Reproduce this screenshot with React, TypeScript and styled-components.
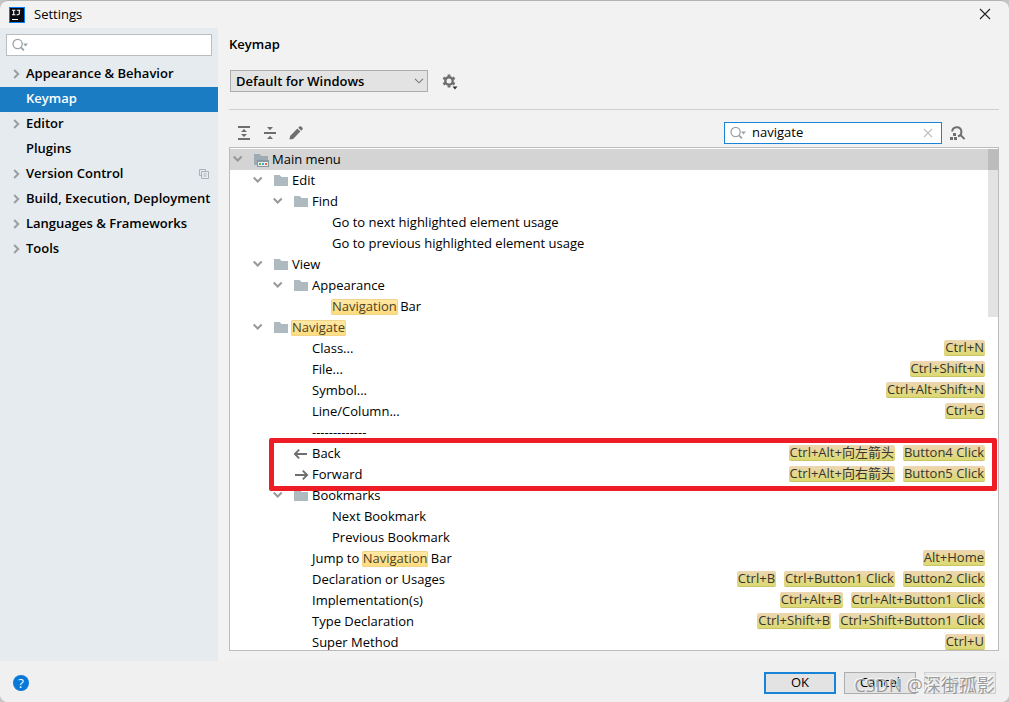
import React from "react";
import styled, { createGlobalStyle, css } from "styled-components";

const GlobalStyle = createGlobalStyle`
  *, *::before, *::after { box-sizing: border-box; }
  html, body { margin: 0; background: #c6c6c6; }
  body, button, input, select {
    font-family: "Open Sans", "Noto Sans CJK SC", sans-serif;
    font-size: 13px;
    line-height: 20px;
    color: #000;
  }
`;

const Window = styled.div`
  position: relative;
  display: flex;
  flex-direction: column;
  height: 100vh;
  overflow: hidden;
  background: #f2f2f2;
  border-top: 1px solid #b4b4b4;
  border-radius: 8px;
`;

const TitleBar = styled.header`
  display: flex;
  align-items: center;
  flex: none;
  height: 27px;
  padding: 0 18px 0 9px;
`;

const WindowTitle = styled.span`
  flex: 1;
  margin-left: 9px;
  padding-bottom: 2px;
`;

const IconButton = styled.button`
  display: flex;
  align-items: center;
  justify-content: center;
  flex: none;
  padding: 0;
  border: 0;
  background: none;
`;

const Body = styled.div`
  display: flex;
  flex: 1;
  min-height: 0;
`;

const Sidebar = styled.aside`
  flex: none;
  width: 218px;
  padding-top: 6px;
  background: #e6ebef;
`;

const SearchBox = styled.label<{ $active?: boolean }>`
  display: flex;
  align-items: center;
  height: 22px;
  padding: 0 8px 0 5px;
  background: #fff;
  border: 1px solid ${(p) => (p.$active ? "#1883d7" : "#b9bdc0")};
  svg { flex: none; }
`;

const SearchInput = styled.input`
  flex: 1;
  min-width: 0;
  height: 18px;
  padding: 0 0 2px;
  margin-left: 4px;
  border: 0;
  outline: 0;
  background: none;
`;

const SidebarSearch = styled.div`
  padding: 0 6px 6px;
`;

const CategoryList = styled.ul`
  margin: 0;
  padding: 0;
  list-style: none;
`;

const CategoryButton = styled.button<{ $selected?: boolean }>`
  display: flex;
  align-items: center;
  width: 100%;
  height: 25px;
  padding: 0 9px 2px 12px;
  border: 0;
  background: ${(p) => (p.$selected ? "#1a7dc4" : "transparent")};
  color: ${(p) => (p.$selected ? "#fff" : "#000")};
  font-weight: 600;
  text-align: left;
  white-space: nowrap;
`;

const CategoryChevron = styled.span`
  display: flex;
  flex: none;
  width: 14px;
`;

const CategoryLabel = styled.span`
  flex: 1;
  padding-bottom: 2px;
`;

const Main = styled.main`
  display: flex;
  flex-direction: column;
  flex: 1;
  min-width: 0;
  padding: 6px 10px 10px 11px;
`;

const PageTitle = styled.h1`
  margin: 0;
  font-size: 13px;
  line-height: 20px;
  font-weight: 600;
`;

const SchemeRow = styled.div`
  display: flex;
  align-items: center;
  gap: 14px;
  padding: 16px 0 17px 1px;
  border-bottom: 1px solid #cfcfcf;
`;

const SelectWrap = styled.div`
  display: grid;
  align-items: center;
  width: 198px;
  > * { grid-area: 1 / 1; }
  > svg { justify-self: end; margin-right: 4px; pointer-events: none; }
`;

const SchemeSelect = styled.select`
  appearance: none;
  width: 100%;
  height: 22px;
  padding: 0 5px;
  border: 1px solid #adadad;
  border-radius: 0;
  background: #e3e3e3;
  font-weight: 600;
`;

const Toolbar = styled.div`
  display: flex;
  align-items: center;
  gap: 10px;
  padding: 12px 33px 3px 7px;
`;

const ToolbarSpacer = styled.div`
  flex: 1;
`;

const FilterGroup = styled.div`
  display: flex;
  align-items: center;
  gap: 8px;
`;

const FilterBox = styled(SearchBox)`
  width: 218px;
`;

const Tree = styled.div`
  position: relative;
  flex: 1;
  min-height: 0;
  overflow: hidden;
  padding-top: 1px;
  background: #fff;
  border: 1px solid #bcbcbc;
`;

const TreeRow = styled.div<{ $level: number; $selected?: boolean }>`
  display: flex;
  align-items: center;
  height: 21px;
  padding: 0 13px 0 ${(p) => 2 + p.$level * 20}px;
  white-space: nowrap;
  ${(p) => p.$selected && css`background: #d4d4d4;`}
`;

const TwistySlot = styled.span`
  display: flex;
  flex: none;
  width: 22px;
  padding-bottom: 1px;
`;

const IconSlot = styled.span`
  display: flex;
  flex: none;
  width: 18px;
  padding-bottom: 1px;
`;

const RowLabel = styled.span`
  flex: 1;
  padding-bottom: 2px;
`;

const Mark = styled.mark`
  display: inline-block;
  height: 16px;
  margin: 0 -1px;
  padding: 0 1px;
  line-height: 14px;
  color: #4a4228;
  background: linear-gradient(#ffe9a8, #ffdc7c);
  border-radius: 2px;
  box-shadow: inset 0 0 0 1px #efd48a;
`;

const Shortcuts = styled.span`
  display: flex;
  gap: 8px;
  padding-bottom: 1px;
`;

const Chip = styled.kbd`
  height: 16px;
  padding: 0 1px;
  font-family: inherit;
  font-size: 13px;
  line-height: 15px;
  color: #35352c;
  background: linear-gradient(#eed6b2, #dcd972);
  border-bottom: 1px solid #c9c566;
  border-radius: 2px;
`;

const Annotated = styled.div`
  position: relative;
`;

const AnnotationFrame = styled.div`
  position: absolute;
  z-index: 2;
  inset: -5px 1px -6px 39px;
  border: 5px solid #ee1c25;
  border-radius: 2px;
  pointer-events: none;
`;

const ScrollTrack = styled.div`
  position: absolute;
  z-index: 1;
  top: 1px;
  right: 0;
  bottom: 0;
  width: 10px;
`;

const ScrollThumb = styled.div`
  height: 168px;
  background: rgba(0, 0, 0, 0.11);
`;

const Footer = styled.footer`
  display: flex;
  align-items: center;
  flex: none;
  gap: 8px;
  height: 41px;
  padding: 2px 13px 0;
  background: #f0f0f0;
`;

const HelpButton = styled.button`
  width: 16px;
  height: 16px;
  margin-right: auto;
  padding: 0;
  border: 0;
  border-radius: 50%;
  background: #0a78d8;
  color: #fff;
  line-height: 16px;
  text-align: center;
`;

const DialogButton = styled.button<{ $primary?: boolean }>`
  width: 72px;
  height: 22px;
  padding: 0 0 2px;
  line-height: 16px;
  background: #e3e3e3;
  border: ${(p) => (p.$primary ? "2px solid #1883d7" : "1px solid #adadad")};
  &:disabled { color: #b4b4b4; background: #eaeaea; border-color: #cfcfcf; }
`;

const Watermark = styled.div`
  position: absolute;
  right: 14px;
  bottom: 5px;
  font-size: 18px;
  line-height: 24px;
  color: rgba(140, 140, 140, 0.85);
  text-shadow: -1px -1px 0 rgba(255, 255, 255, 0.8);
  pointer-events: none;
`;

const SearchIcon = () => (
  <svg width="18" height="16" viewBox="0 0 18 16" fill="none">
    <circle cx="5.6" cy="7" r="4.6" stroke="#9aa3aa" strokeWidth="1.3" />
    <path d="M8.9 10.3 12 13.4" stroke="#9aa3aa" strokeWidth="1.8" />
    <path d="M11 6.5h5l-2.5 3z" fill="#9aa3aa" />
  </svg>
);

const ChevronRight = () => (
  <svg width="10" height="12" viewBox="0 0 10 12" fill="none" stroke="#9a9ea1" strokeWidth="2">
    <path d="m2.2 2 4 4-4 4" />
  </svg>
);

const ChevronDown = () => (
  <svg width="12" height="12" viewBox="0 0 12 12" fill="none" stroke="#999" strokeWidth="2">
    <path d="m1.7 3.5 4 4 4-4" />
  </svg>
);

const Folder = () => (
  <svg width="16" height="16" viewBox="0 0 16 16">
    <path d="M0 3h5.6l2 2H14v9H0z" fill="#aeb9c0" />
  </svg>
);

const MenuFolder = () => (
  <svg width="16" height="16" viewBox="0 0 16 16">
    <path d="M0 3h5.6l2 2H14v3H2v6H0z" fill="#9fabb3" />
    <path d="M2 8h12v1H3v5H2z" fill="#9fabb3" />
    <path d="M3 9h12v7H3z" fill="#8797a3" />
    <path d="M4 11h10v4H4z" fill="#e8edf0" />
    <path d="M5 12h2v2H5z" fill="#62b543" />
    <path d="M8 12h2v2H8z" fill="#40a6dd" />
    <path d="M11 12h2v2h-2z" fill="#f26522" />
  </svg>
);

const Arrow = ({ forward }: { forward?: boolean }) => (
  <svg width="16" height="16" viewBox="0 0 16 16" fill="none" stroke="#6e6e6e" strokeWidth="1.8">
    {forward ? <path d="M1 9h12M8.8 4.6 13.2 9l-4.4 4.4" /> : <path d="M13 9H1M5.2 4.6.8 9l4.4 4.4" />}
  </svg>
);

const AppLogo = () => (
  <svg width="16" height="16" viewBox="0 0 16 16">
    <path d="M0 0h16v16H0z" fill="#087cfa" />
    <path d="M1 1h14v14H1z" fill="#0c0c10" />
    <path d="M3 3.2h3.4M4.7 3v5M3 7.8h3.4M7.8 3.2h3.4M10.3 3v3.6q0 1.2-1.2 1.2H7.6" stroke="#fff" strokeWidth="1.1" fill="none" />
    <path d="M3 12h6v1H3z" fill="#fff" />
  </svg>
);

const CloseIcon = () => (
  <svg width="12" height="14" viewBox="0 0 12 14" stroke="#222" strokeWidth="1.1">
    <path d="m1 1 10 10M11 1 1 11" />
  </svg>
);

const ClearIcon = () => (
  <svg width="10" height="10" viewBox="0 0 10 10" stroke="#bfc3c6" strokeWidth="1.2">
    <path d="m1 1 8 8M9 1 1 9" />
  </svg>
);

const CopyIcon = () => (
  <svg width="10" height="10" viewBox="0 0 10 10" fill="none" stroke="#a9b2b8">
    <path d="M2.5 6.5h-2v-6h6v2M2.5 2.5h7v7h-7zM4.5 5h3M4.5 7h3" />
  </svg>
);

const SelectArrow = () => (
  <svg width="10" height="6" viewBox="0 0 10 6" fill="none" stroke="#777" strokeWidth="1.1">
    <path d="m1 .8 4 4 4-4" />
  </svg>
);

const teeth = [0, 60, 120];

const GearIcon = () => (
  <svg width="17" height="18" viewBox="0 0 17 18">
    <circle cx="7" cy="9" r="3.7" fill="none" stroke="#6e6e6e" strokeWidth="2.4" />
    {teeth.map((a) => (
      <path key={a} d="M5.6 2.5h2.8v2H5.6zM5.6 13.5h2.8v2H5.6z" fill="#6e6e6e" transform={`rotate(${a} 7 9)`} />
    ))}
    <path d="M10.5 14.5h5l-2.5 3z" fill="#333" />
  </svg>
);

const ExpandAllIcon = () => (
  <svg width="16" height="16" viewBox="0 0 16 16" fill="#6e6e6e">
    <path d="M2 1h12v2H2zM2 13h12v2H2zM8 4l3 3H5zM8 12l3-3H5z" />
  </svg>
);

const CollapseAllIcon = () => (
  <svg width="16" height="16" viewBox="0 0 16 16" fill="#6e6e6e">
    <path d="M2 7h12v2H2zM5 2h6L8 5.3zM5 14h6l-3-3.3z" />
  </svg>
);

const PencilIcon = () => (
  <svg width="16" height="16" viewBox="0 0 16 16" fill="#6e6e6e">
    <path d="m1.5 14.5.6-3.6 7.3-7.3 3 3-7.3 7.3zM10.3 2.7l1.1-1.1q.9-.8 1.8 0l1.2 1.2q.8.9 0 1.8l-1.1 1.1z" />
  </svg>
);

const FindShortcutIcon = () => (
  <svg width="16" height="16" viewBox="0 0 16 16" fill="none">
    <path d="M2.2 6.5A4.6 4.6 0 1 1 8 11.2M10.3 9.8l4.3 4.3" stroke="#6e6e6e" strokeWidth="2" />
    <path d="M3 8h3v3H3zM0 12h3v3H0zM4 12h3v3H4z" fill="#6e6e6e" />
  </svg>
);

type Category = { label: string; leaf?: boolean; selected?: boolean; project?: boolean };

const categories: Category[] = [
  { label: "Appearance & Behavior" },
  { label: "Keymap", leaf: true, selected: true },
  { label: "Editor" },
  { label: "Plugins", leaf: true },
  { label: "Version Control", project: true },
  { label: "Build, Execution, Deployment" },
  { label: "Languages & Frameworks" },
  { label: "Tools" },
];

type Item = {
  label: string;
  level: number;
  icon?: "folder" | "menu" | "back" | "forward";
  keys?: string[];
  selected?: boolean;
};

const before: Item[] = [
  { label: "Main menu", level: 0, icon: "menu", selected: true },
  { label: "Edit", level: 1, icon: "folder" },
  { label: "Find", level: 2, icon: "folder" },
  { label: "Go to next highlighted element usage", level: 3 },
  { label: "Go to previous highlighted element usage", level: 3 },
  { label: "View", level: 1, icon: "folder" },
  { label: "Appearance", level: 2, icon: "folder" },
  { label: "Navigation Bar", level: 3 },
  { label: "Navigate", level: 1, icon: "folder" },
  { label: "Class...", level: 2, keys: ["Ctrl+N"] },
  { label: "File...", level: 2, keys: ["Ctrl+Shift+N"] },
  { label: "Symbol...", level: 2, keys: ["Ctrl+Alt+Shift+N"] },
  { label: "Line/Column...", level: 2, keys: ["Ctrl+G"] },
  { label: "-------------", level: 2 },
];

const annotated: Item[] = [
  { label: "Back", level: 2, icon: "back", keys: ["Ctrl+Alt+向左箭头", "Button4 Click"] },
  { label: "Forward", level: 2, icon: "forward", keys: ["Ctrl+Alt+向右箭头", "Button5 Click"] },
];

const after: Item[] = [
  { label: "Bookmarks", level: 2, icon: "folder" },
  { label: "Next Bookmark", level: 3 },
  { label: "Previous Bookmark", level: 3 },
  { label: "Jump to Navigation Bar", level: 2, keys: ["Alt+Home"] },
  { label: "Declaration or Usages", level: 2, keys: ["Ctrl+B", "Ctrl+Button1 Click", "Button2 Click"] },
  { label: "Implementation(s)", level: 2, keys: ["Ctrl+Alt+B", "Ctrl+Alt+Button1 Click"] },
  { label: "Type Declaration", level: 2, keys: ["Ctrl+Shift+B", "Ctrl+Shift+Button1 Click"] },
  { label: "Super Method", level: 2, keys: ["Ctrl+U"] },
];

const highlight = (label: string) =>
  label
    .split(/(Navigat(?:ion|e))/)
    .map((part, i) => (i % 2 ? <Mark key={i}>{part}</Mark> : part));

const TreeItem = ({ item }: { item: Item }) => {
  const expandable = item.icon === "folder" || item.icon === "menu";
  return (
    <TreeRow
      role="treeitem"
      aria-level={item.level + 1}
      aria-selected={!!item.selected}
      $level={item.level}
      $selected={item.selected}
    >
      <TwistySlot>{expandable && <ChevronDown />}</TwistySlot>
      <IconSlot>
        {item.icon === "folder" && <Folder />}
        {item.icon === "menu" && <MenuFolder />}
        {item.icon === "back" && <Arrow />}
        {item.icon === "forward" && <Arrow forward />}
      </IconSlot>
      <RowLabel>{highlight(item.label)}</RowLabel>
      {item.keys && (
        <Shortcuts>
          {item.keys.map((k) => (
            <Chip key={k}>{k}</Chip>
          ))}
        </Shortcuts>
      )}
    </TreeRow>
  );
};

export default function App() {
  return (
    <>
      <GlobalStyle />
      <Window>
        <TitleBar>
          <AppLogo />
          <WindowTitle>Settings</WindowTitle>
          <IconButton aria-label="Close">
            <CloseIcon />
          </IconButton>
        </TitleBar>
        <Body>
          <Sidebar>
            <SidebarSearch>
              <SearchBox>
                <SearchIcon />
                <SearchInput aria-label="Search settings" />
              </SearchBox>
            </SidebarSearch>
            <CategoryList>
              {categories.map((c) => (
                <li key={c.label}>
                  <CategoryButton $selected={c.selected}>
                    <CategoryChevron>{!c.leaf && <ChevronRight />}</CategoryChevron>
                    <CategoryLabel>{c.label}</CategoryLabel>
                    {c.project && <CopyIcon />}
                  </CategoryButton>
                </li>
              ))}
            </CategoryList>
          </Sidebar>
          <Main>
            <PageTitle>Keymap</PageTitle>
            <SchemeRow>
              <SelectWrap>
                <SchemeSelect aria-label="Keymap scheme">
                  <option>Default for Windows</option>
                </SchemeSelect>
                <SelectArrow />
              </SelectWrap>
              <IconButton aria-label="Scheme actions">
                <GearIcon />
              </IconButton>
            </SchemeRow>
            <Toolbar>
              <IconButton aria-label="Expand all">
                <ExpandAllIcon />
              </IconButton>
              <IconButton aria-label="Collapse all">
                <CollapseAllIcon />
              </IconButton>
              <IconButton aria-label="Edit shortcut">
                <PencilIcon />
              </IconButton>
              <ToolbarSpacer />
              <FilterGroup>
                <FilterBox $active>
                  <SearchIcon />
                  <SearchInput aria-label="Filter actions" defaultValue="navigate" />
                  <IconButton aria-label="Clear">
                    <ClearIcon />
                  </IconButton>
                </FilterBox>
                <IconButton aria-label="Find actions by shortcut">
                  <FindShortcutIcon />
                </IconButton>
              </FilterGroup>
            </Toolbar>
            <Tree role="tree" aria-label="Keymap actions">
              {before.map((i) => (
                <TreeItem key={i.label} item={i} />
              ))}
              <Annotated>
                {annotated.map((i) => (
                  <TreeItem key={i.label} item={i} />
                ))}
                <AnnotationFrame />
              </Annotated>
              {after.map((i) => (
                <TreeItem key={i.label} item={i} />
              ))}
              <ScrollTrack>
                <ScrollThumb />
              </ScrollTrack>
            </Tree>
          </Main>
        </Body>
        <Footer>
          <HelpButton aria-label="Help">?</HelpButton>
          <DialogButton $primary>OK</DialogButton>
          <DialogButton>Cancel</DialogButton>
          <DialogButton disabled>Apply</DialogButton>
        </Footer>
        <Watermark>CSDN @深街孤影</Watermark>
      </Window>
    </>
  );
}
